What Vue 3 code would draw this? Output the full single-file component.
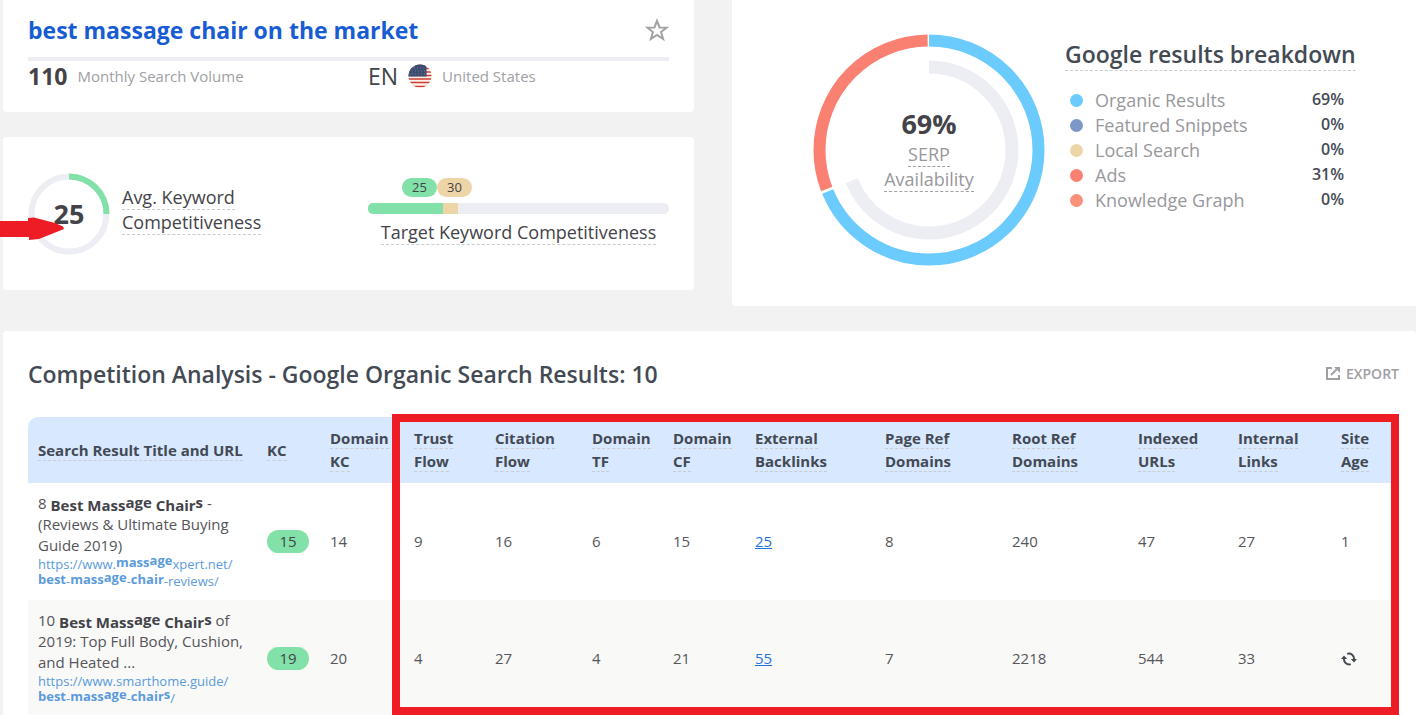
<script setup>
const breakdown = [
  { name: 'Organic Results', value: '69%', tone: 'sky' },
  { name: 'Featured Snippets', value: '0%', tone: 'indigo' },
  { name: 'Local Search', value: '0%', tone: 'sand' },
  { name: 'Ads', value: '31%', tone: 'coral' },
  { name: 'Knowledge Graph', value: '0%', tone: 'salmon' },
]

const columns = [
  { label: 'Search Result Title and URL', weight: 229 },
  { label: 'KC', weight: 63 },
  { label: 'Domain KC', weight: 84 },
  { label: 'Trust Flow', weight: 81 },
  { label: 'Citation Flow', weight: 97 },
  { label: 'Domain TF', weight: 81 },
  { label: 'Domain CF', weight: 82 },
  { label: 'External Backlinks', weight: 130 },
  { label: 'Page Ref Domains', weight: 127 },
  { label: 'Root Ref Domains', weight: 126 },
  { label: 'Indexed URLs', weight: 100 },
  { label: 'Internal Links', weight: 103 },
  { label: 'Site Age', weight: 68 },
]
const totalWeight = columns.reduce((sum, c) => sum + c.weight, 0)

// Text pieces: '' plain, 'b' matched keyword, 'u' raised part of a matched keyword
const rows = [
  {
    title: [['', '8 '], ['b', 'Best Mass'], ['u', 'age'], ['b', ' Chair'], ['u', 's'], ['', ' - (Reviews & Ultimate Buying Guide 2019)']],
    url: [
      [['', 'https://www.'], ['b', 'mass'], ['u', 'age'], ['', 'xpert.net/']],
      [['b', 'best'], ['', '-'], ['b', 'mass'], ['u', 'age'], ['', '-'], ['b', 'chair'], ['', '-reviews/']],
    ],
    kc: 15,
    before: [14, 9, 16, 6, 15],
    backlinks: 25,
    after: [8, 240, 47, 27],
    age: 1,
  },
  {
    title: [['', '10 '], ['b', 'Best Mass'], ['u', 'age'], ['b', ' Chair'], ['u', 's'], ['', ' of 2019: Top Full Body, Cushion, and Heated ...']],
    url: [
      [['', 'https://www.smarthome.guide/']],
      [['b', 'best'], ['', '-'], ['b', 'mass'], ['u', 'age'], ['', '-'], ['b', 'chair'], ['u', 's'], ['', '/']],
    ],
    kc: 19,
    before: [20, 4, 27, 4, 21],
    backlinks: 55,
    after: [7, 2218, 544, 33],
    age: null,
  },
]
const pieceClass = { '': 'plain', b: 'match', u: 'match raised' }
</script>

<template>
  <main class="page">
    <div class="summary">
      <div class="left">
        <section class="card keyword">
          <header class="keyword-head">
            <h1>best massage chair on the market</h1>
            <button class="star" type="button" aria-label="Add to favourites">
              <svg viewBox="0 0 24 24" width="24" height="24">
                <path d="M12 2.8l2.5 6.6 7.2.2-5.6 4.4 2 6.9L12 17l-6.1 3.9 2-6.9-5.6-4.4 7.2-.2z" fill="none" stroke="#a2a2a6" stroke-width="2" />
              </svg>
            </button>
          </header>
          <div class="halves facts">
            <div class="fact"><strong>110</strong><span>Monthly Search Volume</span></div>
            <div class="fact">
              <b>EN</b>
              <svg class="flag" viewBox="0 0 24 24" width="24" height="24">
                <clipPath id="disc"><circle cx="12" cy="12" r="11.5" /></clipPath>
                <g clip-path="url(#disc)">
                  <path d="M0 0h24v24H0z" fill="#f7f3ec" />
                  <path d="M0 1h24M0 4.5h24M0 8h24M0 11.5h24M0 15h24M0 18.5h24M0 22.5h24" stroke="#d23a32" stroke-width="1.5" />
                  <path d="M0 0h18.5v12.5H0z" fill="#3c4d70" />
                  <path d="M3 4h15M1 7h17M1 10h17" stroke="#66779a" stroke-width="1" stroke-dasharray="1 2" />
                </g>
              </svg>
              <span>United States</span>
            </div>
          </div>
        </section>

        <section class="card halves competitiveness">
          <div class="average">
            <div class="gauge">
              <svg viewBox="0 0 82 82" width="82" height="82">
                <circle cx="41" cy="41" r="37.5" fill="none" stroke="#ededf4" stroke-width="6" />
                <path d="M41 3.5A37.5 37.5 0 0 1 78.5 41" fill="none" stroke="#82e1a8" stroke-width="6" />
              </svg>
              <strong>25</strong>
            </div>
            <p><span class="hint">Avg. Keyword Competitiveness</span></p>
            <svg class="arrow" viewBox="0 0 64 24" width="64" height="24">
              <path d="M0 4H28V1L34 0.500L55 6L63 9.500L64 12L59 14L39 22L29 23V20H0z" fill="#ee1c24" />
            </svg>
          </div>
          <div class="target">
            <div class="pills"><span class="pill">25</span><span class="pill sand">30</span></div>
            <div class="bar"><i class="bar-green"></i><i class="bar-sand"></i></div>
            <p><span class="hint">Target Keyword Competitiveness</span></p>
          </div>
        </section>
      </div>

      <section class="card results">
        <div class="donut">
          <svg viewBox="0 0 232 232" width="232" height="232">
            <g fill="none" transform="rotate(-90 116 116)">
              <circle cx="116" cy="116" r="109.500" pathLength="100" stroke="#6bcbfd" stroke-width="12" stroke-dasharray="68.800 31.200" />
              <circle cx="116" cy="116" r="109.500" pathLength="100" stroke="#fa8072" stroke-width="12" stroke-dasharray="30.600 69.400" stroke-dashoffset="-69.200" />
              <circle cx="116" cy="116" r="83" pathLength="100" stroke="#ededf4" stroke-width="13" stroke-dasharray="69 31" />
            </g>
          </svg>
          <div class="donut-text">
            <strong>69%</strong>
            <p><span class="hint">SERP Availability</span></p>
          </div>
        </div>
        <div class="breakdown">
          <h2><span class="hint">Google results breakdown</span></h2>
          <ul>
            <li v-for="b in breakdown" :key="b.name">
              <i class="dot" :class="b.tone"></i><span>{{ b.name }}</span><strong>{{ b.value }}</strong>
            </li>
          </ul>
        </div>
      </section>
    </div>

    <section class="card analysis">
      <header class="analysis-head">
        <h2>Competition Analysis - Google Organic Search Results: 10</h2>
        <button class="export" type="button">
          <svg viewBox="0 0 16 16" width="16" height="16" fill="none" stroke="#a0a0a4" stroke-width="2">
            <path d="M7 3H2v11h12V10M6 10L11.500 4.500" />
            <path d="M9 2h6v6z" fill="#a0a0a4" stroke="none" />
          </svg>
          EXPORT
        </button>
      </header>
      <div class="table-wrap">
        <table>
          <colgroup>
            <col v-for="c in columns" :key="c.label" :style="{ width: (c.weight / totalWeight) * 100 + '%' }" />
          </colgroup>
          <thead>
            <tr>
              <th v-for="c in columns" :key="c.label" scope="col"><span class="hint">{{ c.label }}</span></th>
            </tr>
          </thead>
          <tbody>
            <tr v-for="r in rows" :key="r.kc">
              <td class="result">
                <p><span v-for="(t, i) in r.title" :key="i" :class="pieceClass[t[0]]">{{ t[1] }}</span></p>
                <a href="#"><span v-for="(line, n) in r.url" :key="n" class="url-line"><span v-for="(t, i) in line" :key="i" :class="pieceClass[t[0]]">{{ t[1] }}</span></span></a>
              </td>
              <td><span class="pill large">{{ r.kc }}</span></td>
              <td v-for="(v, i) in r.before" :key="'b' + i">{{ v }}</td>
              <td><a class="count" href="#">{{ r.backlinks }}</a></td>
              <td v-for="(v, i) in r.after" :key="'a' + i">{{ v }}</td>
              <td>
                <template v-if="r.age !== null">{{ r.age }}</template>
                <button v-else class="refresh" type="button" aria-label="Refresh site age">
                  <svg viewBox="0 0 16 14" width="16" height="14" fill="none" stroke="#434a54" stroke-width="2">
                    <path d="M3 6.500A5.200 5.200 0 0 0 9.800 12.100M6.200 1.900A5.200 5.200 0 0 1 13 7.500" />
                    <path d="M0 7L3 3.500L6.200 7zM9.800 7H16L13 10.500z" fill="#434a54" stroke="none" />
                  </svg>
                </button>
              </td>
            </tr>
          </tbody>
        </table>
        <div class="frame"></div>
      </div>
    </section>
  </main>
</template>

<style>
body {
  margin: 0;
  background: #f2f2f2;
}
</style>

<style scoped>
.page {
  box-sizing: border-box;
  height: 100vh;
  overflow: hidden;
  padding-left: 3px;
  background: #f2f2f2;
  color: #434a54;
  font: 15px/21px "Open Sans", "Noto Sans", sans-serif;
}
h1, h2, p, ul {
  margin: 0;
  padding: 0;
}
button {
  padding: 0;
  border: 0;
  background: none;
  font: inherit;
  color: inherit;
}
svg {
  display: block;
}
.card {
  background: #fff;
  border-radius: 4px;
}
.hint {
  border-bottom: 1px dashed #c9ccd1;
}
.summary {
  display: grid;
  grid-template-columns: minmax(0, 691fr) minmax(0, 684fr);
  gap: 38px;
}
.left {
  display: flex;
  flex-direction: column;
  gap: 25px;
}
.halves {
  display: grid;
  grid-template-columns: 340fr 301fr;
}
.keyword {
  padding: 0 25px 21px;
  border-radius: 0 0 4px 4px;
}
.keyword-head {
  display: flex;
  justify-content: space-between;
  align-items: center;
  padding: 4px 0 1px;
  height: 52px;
  border-bottom: 4px solid #ededf4;
}
h1 {
  font-size: 23px;
  line-height: 32px;
  font-weight: 700;
  color: #175cd3;
}
.facts {
  height: 30px;
}
.fact {
  display: flex;
  align-items: center;
  gap: 10px;
  color: #a0a0a4;
}
.fact strong, .fact b {
  font-size: 23px;
  font-weight: 700;
  color: #434349;
}
.fact b {
  font-weight: 400;
}
.competitiveness {
  height: 153px;
  box-sizing: border-box;
  padding: 0 25px;
  align-items: center;
}
.average {
  position: relative;
  display: flex;
  align-items: center;
  gap: 12px;
  font-size: 18px;
  line-height: 25px;
  color: #434349;
}
.average p {
  width: 150px;
  padding-bottom: 7px;
}
.gauge {
  display: grid;
  place-items: center;
}
.gauge > * {
  grid-area: 1 / 1;
}
.gauge strong, .donut-text strong {
  font-size: 27px;
  line-height: 36px;
  font-weight: 700;
  color: #434349;
}
.arrow {
  position: absolute;
  left: -28px;
  top: 44px;
}
.target {
  padding-bottom: 4px;
  font-size: 18px;
  line-height: 25px;
  text-align: center;
  color: #434349;
}
.pills {
  display: flex;
  padding-left: 34px;
  margin-bottom: 6px;
}
.pill {
  width: 35px;
  border-radius: 10px;
  background: #82e1a8;
  font-size: 13px;
  line-height: 19px;
  text-align: center;
  color: #434349;
}
.pill.sand {
  background: #eed5a8;
}
.pill.large {
  display: block;
  width: 42px;
  border-radius: 12px;
  font-size: 15px;
  line-height: 23px;
}
.bar {
  display: flex;
  height: 11px;
  margin-bottom: 6px;
  border-radius: 5px;
  overflow: hidden;
  background: #ededf4;
}
.bar-green {
  width: 25%;
  background: #82e1a8;
}
.bar-sand {
  width: 5%;
  background: #eed5a8;
}
.results {
  display: flex;
  align-items: flex-start;
  gap: 20px;
  padding: 34px 58px 40px 81px;
  border-radius: 0 0 0 4px;
}
.donut {
  display: grid;
  place-items: center;
  flex: none;
}
.donut > * {
  grid-area: 1 / 1;
}
.donut-text {
  width: 110px;
  padding-bottom: 3px;
  text-align: center;
  font-size: 18px;
  line-height: 25px;
  font-weight: 500;
  color: #98989c;
}
.donut-text .hint {
  border-color: #a0a0a4;
}
.breakdown {
  flex: 1;
}
.breakdown h2 {
  font-size: 23px;
  line-height: 32px;
  font-weight: 600;
  white-space: nowrap;
  padding-top: 4px;
}
.breakdown ul {
  list-style: none;
  padding: 18px 14px 0 5px;
}
.breakdown li {
  display: flex;
  align-items: center;
  font-size: 18px;
  line-height: 25px;
  color: #98989c;
  font-weight: 500;
}
.breakdown li strong {
  margin-left: auto;
  padding-bottom: 2px;
  font-size: 16px;
  line-height: 23px;
  font-weight: 600;
  color: #434a54;
}
.dot {
  width: 13px;
  height: 13px;
  margin-right: 12px;
  border-radius: 50%;
}
.sky { background: #6bcbfd; }
.indigo { background: #7b98c8; }
.sand { background: #eed5a8; }
.coral { background: #fa8072; }
.salmon { background: #fb9179; }
.analysis {
  margin-top: 25px;
  padding: 26px 17px 26px 25px;
}
.analysis-head {
  display: flex;
  justify-content: space-between;
  align-items: center;
  margin-bottom: 26px;
}
.analysis h2 {
  font-size: 23px;
  line-height: 34px;
  font-weight: 600;
}
.export {
  display: flex;
  align-items: center;
  gap: 5px;
  padding-bottom: 2px;
  font-size: 14px;
  font-weight: 600;
  color: #a0a0a4;
}
.table-wrap {
  position: relative;
}
table {
  width: 100%;
  table-layout: fixed;
  border-collapse: collapse;
}
th, td {
  padding: 0 10px;
  text-align: left;
}
th {
  height: 66px;
  background: #d8e8ff;
  font-size: 15px;
  line-height: 23px;
  font-weight: 700;
}
th:first-child {
  border-radius: 10px 0 0 0;
  white-space: nowrap;
}
td {
  height: 117px;
  color: #55555a;
}
tbody tr:nth-child(even) {
  background: #f9f9f8;
}
.result p {
  line-height: 21px;
}
.result a {
  display: block;
  font-size: 13px;
  line-height: 17px;
  color: #5b9bdc;
  text-decoration: none;
}
.url-line {
  display: block;
  height: 17px;
}
.match {
  font-weight: 700;
  line-height: 1px;
  vertical-align: -2px;
}
.result p .match {
  color: #434349;
}
.result a .match {
  vertical-align: 2px;
}
.result p .match.raised {
  vertical-align: 1px;
}
.result a .match.raised {
  vertical-align: 4px;
}
.count {
  color: #1f72de;
}
.refresh {
  display: block;
}
.frame {
  position: absolute;
  top: -3px;
  bottom: 2px;
  left: 364px;
  right: 0;
  box-sizing: border-box;
  border: 8px solid #ee1c24;
}
</style>
